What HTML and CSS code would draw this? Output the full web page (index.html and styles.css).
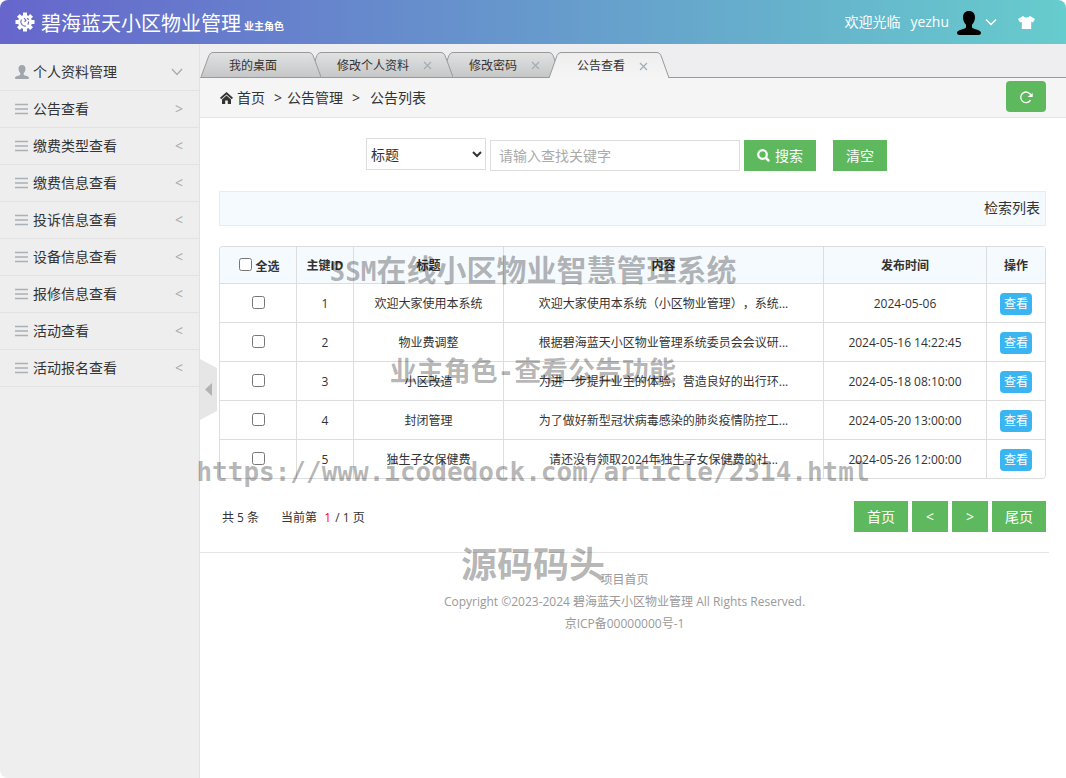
FILE: index.html
```html
<!DOCTYPE html>
<html lang="zh-CN">
<head>
<meta charset="utf-8">
<title>碧海蓝天小区物业管理</title>
<link rel="stylesheet" href="styles.css">
</head>
<body>
<svg class="defs" aria-hidden="true">
  <defs>
    <linearGradient id="tab-grey" x1="0" y1="0" x2="0" y2="1"><stop offset="0" stop-color="#e0e1e1"/><stop offset="1" stop-color="#c6c7c8"/></linearGradient>
    <linearGradient id="tab-light" x1="0" y1="0" x2="0" y2="1"><stop offset="0" stop-color="#eeeeef"/><stop offset="1" stop-color="#f5f5f5"/></linearGradient>
    <symbol id="bars" viewBox="0 0 13 12"><path d="M0 1.500h13M0 6h13M0 10.500h13" stroke="#a9b0b6" stroke-width="1.500"/></symbol>
    <symbol id="user" viewBox="0 0 24 24"><path d="M12 0c3.900 0 6 2.600 6 6.300 0 3-1.300 5.700-3 7.500v2.800c1.700 2 9 2.200 9 5.200 0 1.500-1 2.200-2.500 2.200h-19C1 24 0 23.300 0 21.800c0-3 7.300-3.200 9-5.200v-2.800C7.300 12 6 9.300 6 6.300 6 2.600 8.100 0 12 0z"/></symbol>
    <symbol id="cross" viewBox="0 0 9 9"><path d="M1 1l7 7M8 1L1 8" fill="none" stroke="currentColor" stroke-width="1.300"/></symbol>
    <symbol id="cap-left" viewBox="0 0 12 26" preserveAspectRatio="none"><path d="M0 26L8 3.500Q9.300.5 12 .5V26z"/><path d="M0 26L8 3.500Q9.300.5 12 .5" fill="none" stroke="#999"/></symbol>
    <symbol id="cap-right" viewBox="0 0 12 26" preserveAspectRatio="none"><path d="M12 26L4 3.500Q2.700.5 0 .5V26z"/><path d="M12 26L4 3.500Q2.700.5 0 .5" fill="none" stroke="#999"/></symbol>
  </defs>
</svg>
<div class="app">
  <header class="header">
    <svg class="logo" viewBox="0 0 20 20"><g stroke="#fff" stroke-width="4"><path d="M10 .5v19M.5 10h19M3.400 3.400l13.200 13.200M16.600 3.400L3.400 16.600"/></g><circle cx="10" cy="10" r="7" fill="#fff"/><path d="M6.500 7.500A4.300 4.300 0 0 0 11 14M9 6.200l2 2-1.500 1.700M13.500 9.500a4 4 0 0 1-.8 3.200M12 6.300a4 4 0 0 1 1.700 1.600" fill="none" stroke="#6a70cb" stroke-width="1.200"/></svg>
    <h1 class="title">碧海蓝天小区物业管理</h1>
    <span class="role">业主角色</span>
    <div class="account">
      <span>欢迎光临</span>
      <span class="name">yezhu</span>
      <svg class="avatar" viewBox="0 0 24 24"><use href="#user"/></svg>
      <svg class="down" viewBox="0 0 12 8"><path d="M1 1.500l5 5 5-5" fill="none" stroke="#fff" stroke-width="1.500"/></svg>
      <svg class="shirt" viewBox="0 0 17 13"><path d="M5 0q3.500 3 7 0l5 3-2 3.500-1.800-.8V13H3.800V5.700L2 6.500 0 3z" fill="#fff"/></svg>
    </div>
  </header>
  <div class="body">
    <nav class="sidebar">
      <a class="item" href="#"><svg class="icon person" viewBox="0 0 24 24"><use href="#user"/></svg><span>个人资料管理</span><svg class="arrow-down" viewBox="0 0 12 8"><path d="M1 1l5 5.500L11 1" fill="none" stroke="#aaa" stroke-width="1.300"/></svg></a>
      <a class="item" href="#"><svg class="icon"><use href="#bars"/></svg><span>公告查看</span><i class="arrow">&gt;</i></a>
      <a class="item" href="#"><svg class="icon"><use href="#bars"/></svg><span>缴费类型查看</span><i class="arrow">&lt;</i></a>
      <a class="item" href="#"><svg class="icon"><use href="#bars"/></svg><span>缴费信息查看</span><i class="arrow">&lt;</i></a>
      <a class="item" href="#"><svg class="icon"><use href="#bars"/></svg><span>投诉信息查看</span><i class="arrow">&lt;</i></a>
      <a class="item" href="#"><svg class="icon"><use href="#bars"/></svg><span>设备信息查看</span><i class="arrow">&lt;</i></a>
      <a class="item" href="#"><svg class="icon"><use href="#bars"/></svg><span>报修信息查看</span><i class="arrow">&lt;</i></a>
      <a class="item" href="#"><svg class="icon"><use href="#bars"/></svg><span>活动查看</span><i class="arrow">&lt;</i></a>
      <a class="item" href="#"><svg class="icon"><use href="#bars"/></svg><span>活动报名查看</span><i class="arrow">&lt;</i></a>
      <button class="collapse" type="button" aria-label="收起菜单"><svg viewBox="0 0 17 61"><path d="M0 0l17 9v43L0 61z" fill="#e6e6e6"/><path d="M12 24v13l-7-6.500z" fill="#b3b3b3"/></svg></button>
    </nav>
    <main class="main">
      <ul class="tabs">
        <li class="tab first"><svg class="cap"><use href="#cap-left"/></svg><span class="label">我的桌面</span><svg class="cap"><use href="#cap-right"/></svg></li>
        <li class="tab second"><svg class="cap"><use href="#cap-left"/></svg><span class="label">修改个人资料<svg class="close"><use href="#cross"/></svg></span><svg class="cap"><use href="#cap-right"/></svg></li>
        <li class="tab"><svg class="cap"><use href="#cap-left"/></svg><span class="label">修改密码<svg class="close"><use href="#cross"/></svg></span><svg class="cap"><use href="#cap-right"/></svg></li>
        <li class="tab active"><svg class="cap"><use href="#cap-left"/></svg><span class="label">公告查看<svg class="close"><use href="#cross"/></svg></span><svg class="cap"><use href="#cap-right"/></svg></li>
      </ul>
      <div class="crumbs">
        <svg class="home" viewBox="0 0 13 12"><path d="M6.500 0L13 5.800l-1.200 1.400-5.300-4.600-5.300 4.600L0 5.800z"/><path d="M6.500 3.500L11 7.400V12H7.800V8.500H5.200V12H2V7.400z"/></svg>
        <a href="#">首页</a><span class="sep">&gt;</span><a href="#">公告管理</a><span class="sep wide">&gt;</span><span>公告列表</span>
        <button class="refresh" type="button" aria-label="刷新"><svg viewBox="0 0 14 14"><path d="M11.500 10.200A5.300 5.300 0 1 1 12 5.500" fill="none" stroke="#fff" stroke-width="1.300"/><path d="M8.500 7h5.200V3z" fill="#fff"/></svg></button>
      </div>
      <section class="content">
        <form class="search">
          <select class="field" aria-label="查找字段"><option>标题</option></select>
          <input class="keyword" type="text" placeholder="请输入查找关键字" aria-label="关键字">
          <button class="btn" type="button"><svg class="glass" viewBox="0 0 13 13"><circle cx="5.500" cy="5.500" r="4.300" fill="none" stroke="#fff" stroke-width="2.200"/><path d="M8.500 8.500l3.700 3.700" stroke="#fff" stroke-width="2.600"/></svg>搜索</button>
          <button class="btn clear" type="button">清空</button>
        </form>
        <div class="toolbar">检索列表</div>
        <table class="list">
          <colgroup><col class="c-check"><col class="c-id"><col class="c-title"><col><col class="c-time"><col class="c-op"></colgroup>
          <thead>
            <tr><th><label class="all"><input type="checkbox">全选</label></th><th>主键ID</th><th>标题</th><th>内容</th><th>发布时间</th><th>操作</th></tr>
          </thead>
          <tbody>
            <tr><td><input type="checkbox" aria-label="选择 1"></td><td>1</td><td>欢迎大家使用本系统</td><td>欢迎大家使用本系统（小区物业管理），系统...</td><td>2024-05-06</td><td><a class="view" href="#">查看</a></td></tr>
            <tr><td><input type="checkbox" aria-label="选择 2"></td><td>2</td><td>物业费调整</td><td>根据碧海蓝天小区物业管理系统委员会会议研...</td><td>2024-05-16 14:22:45</td><td><a class="view" href="#">查看</a></td></tr>
            <tr><td><input type="checkbox" aria-label="选择 3"></td><td>3</td><td>小区改造</td><td>为进一步提升业主的体验，营造良好的出行环...</td><td>2024-05-18 08:10:00</td><td><a class="view" href="#">查看</a></td></tr>
            <tr><td><input type="checkbox" aria-label="选择 4"></td><td>4</td><td>封闭管理</td><td>为了做好新型冠状病毒感染的肺炎疫情防控工...</td><td>2024-05-20 13:00:00</td><td><a class="view" href="#">查看</a></td></tr>
            <tr><td><input type="checkbox" aria-label="选择 5"></td><td>5</td><td>独生子女保健费</td><td>请还没有领取2024年独生子女保健费的社...</td><td>2024-05-26 12:00:00</td><td><a class="view" href="#">查看</a></td></tr>
          </tbody>
        </table>
        <div class="pager">
          <span>共 5 条</span>
          <span class="page">当前第 <b>1</b> / 1 页</span>
          <div class="buttons">
            <button class="btn" type="button">首页</button>
            <button class="btn" type="button">&lt;</button>
            <button class="btn" type="button">&gt;</button>
            <button class="btn" type="button">尾页</button>
          </div>
        </div>
      </section>
      <footer class="footer">
        <p><a href="#">项目首页</a></p>
        <p>Copyright ©2023-2024 碧海蓝天小区物业管理 All Rights Reserved.</p>
        <p>京ICP备00000000号-1</p>
      </footer>
    </main>
  </div>
  <div class="watermark">
    <p class="w-name"><span>SSM</span>在线小区物业智慧管理系统</p>
    <p class="w-page">业主角色<span>-</span>查看公告功能</p>
    <p class="w-url">https://www.icodedock.com/article/2314.html</p>
    <p class="w-brand">源码码头</p>
  </div>
</div>
</body>
</html>
```
FILE: styles.css
```css
* { box-sizing: border-box; }
body {
  margin: 0;
  background: #fff;
  color: #333;
  font: 14px/20px "Open Sans", "Noto Sans CJK SC", sans-serif;
  text-spacing-trim: space-all;
}
a { color: inherit; text-decoration: none; }
p, ul, h1 { margin: 0; padding: 0; }
button, input, select { font: inherit; }
svg { flex: none; display: block; }
.defs { position: absolute; width: 0; height: 0; }

.app {
  position: relative;
  display: flex;
  flex-direction: column;
  min-height: 100vh;
  overflow: hidden;
  border-radius: 8px;
  background: #fff;
}

.header {
  display: flex;
  align-items: center;
  height: 44px;
  padding: 0 31px 0 15px;
  color: #fff;
  background: linear-gradient(90deg, #66c, #6cc);
}
.logo { width: 20px; height: 20px; margin-right: 6px; }
.title { padding-top: 3px; font-size: 20px; line-height: 41px; font-weight: 400; }
.role { margin: 8px 0 0 3px; font-size: 10px; font-weight: 700; }
.account { display: flex; align-items: center; margin-left: auto; }
.name { margin: 0 8px 0 10px; }
.avatar { width: 24px; height: 24px; margin-top: 2px; fill: #000; }
.down { width: 12px; height: 8px; margin: 0 21px 0 4px; }
.shirt { width: 17px; height: 13px; }

.body { display: flex; flex: 1; }
.sidebar {
  position: relative;
  flex: none;
  width: 200px;
  padding-top: 10px;
  background: #eee;
  border-right: 1px solid #e2e2e2;
}
.item {
  display: flex;
  align-items: center;
  height: 37px;
  padding: 0 16px 0 15px;
  border-bottom: 1px solid #e2e2e2;
}
.icon { width: 13px; height: 12px; margin-right: 5px; }
.person { width: 14px; height: 14px; margin-right: 4px; fill: #a0a6ac; }
.arrow { margin-left: auto; color: #aaa; font-style: normal; }
.arrow-down { width: 12px; height: 8px; margin-left: auto; }
.collapse {
  position: absolute;
  top: 315px;
  left: 200px;
  width: 17px;
  height: 61px;
  padding: 0;
  border: 0;
  background: none;
}
.collapse svg { width: 17px; height: 61px; }

.main { flex: 1; min-width: 0; }
.tabs {
  display: flex;
  align-items: flex-end;
  height: 34px;
  padding-left: 1px;
  background: #eeeef0;
  border-bottom: 1px solid #999;
  list-style: none;
  font-size: 12px;
}
.tab { position: relative; display: flex; height: 25px; margin: 0 -12px 0 0; fill: url(#tab-grey); }
.cap { width: 12px; height: 100%; }
.label {
  display: flex;
  align-items: center;
  height: 100%;
  padding: 1px 9px 0 16px;
  border-top: 1px solid #999;
  background: linear-gradient(#e0e1e1, #c6c7c8);
}
.first { z-index: 3; }
.first .label { padding-right: 32px; }
.second { z-index: 2; }
.tab.active { z-index: 4; fill: url(#tab-light); margin-bottom: -1px; height: 26px; }
.active .label { background: linear-gradient(#eeeeef, #f5f5f5); }
.close { width: 9px; height: 9px; margin-left: 14px; color: #a5adb3; }

.crumbs {
  display: flex;
  align-items: center;
  height: 40px;
  padding: 0 20px;
  background: #f5f5f5;
  border-bottom: 1px solid #e5e5e5;
}
.home { width: 13px; height: 12px; margin-right: 4px; fill: #333; }
.sep { margin: 0 5px 0 9px; }
.sep.wide { margin-right: 10px; }
.refresh {
  display: flex;
  align-items: center;
  justify-content: center;
  width: 40px;
  height: 31px;
  margin-left: auto;
  margin-bottom: 2px;
  padding: 0;
  border: 0;
  border-radius: 4px;
  background: #5eb85e;
}
.refresh svg { width: 14px; height: 14px; }

.content { padding: 20px 20px 20px 19px; }
.search { display: flex; justify-content: center; gap: 4px; padding-right: 12px; }
.field {
  width: 120px;
  height: 32px;
  padding: 0;
  border: 1px solid #ddd;
  background: #fff;
  color: #333;
}
.keyword {
  width: 250px;
  height: 31px;
  margin-top: 2px;
  padding: 4px 8px;
  border: 1px solid #ddd;
}
.keyword::placeholder { color: #aaa; }
.btn {
  display: flex;
  align-items: center;
  justify-content: center;
  min-width: 36px;
  height: 31px;
  padding: 0 13px;
  border: 0;
  background: #5eb85e;
  color: #fff;
}
.search .btn { margin-top: 2px; }
.search .clear { margin-left: 13px; }
.glass { width: 13px; height: 13px; margin-right: 5px; }

.toolbar {
  height: 35px;
  margin-top: 20px;
  padding: 0 5px;
  border: 1px solid #ebebeb;
  background: #f5fafe;
  line-height: 32px;
  text-align: right;
}

.list {
  width: 100%;
  margin-top: 20px;
  table-layout: fixed;
  border: 1px solid #ddd;
  border-width: 1px 0 0 1px;
  border-radius: 4px;
  border-spacing: 0;
  overflow: hidden;
  font-size: 12px;
  text-align: center;
}
.c-check { width: 77px; }
.c-id { width: 57px; }
.c-title { width: 150px; }
.c-time { width: 163px; }
.c-op { width: 59px; }
.list th, .list td {
  padding: 2px 0 0;
  border: 1px solid #ddd;
  border-width: 0 1px 1px 0;
  white-space: nowrap;
}
.list th { height: 37px; background: #f5fafe; }
.list td { height: 39px; }
.list tr:last-child td:last-child { border-bottom-right-radius: 4px; }
.list input { margin: 3px; vertical-align: 0; }
.list td input { margin-bottom: 5px; }
.list th input { margin-bottom: 2px; }
.view {
  display: inline-block;
  padding: 1px 4px;
  border-radius: 4px;
  background: #3bb4f2;
  color: #fff;
}

.pager {
  display: flex;
  align-items: center;
  margin-top: 22px;
  padding-left: 3px;
  font-size: 12px;
}
.pager span { padding-top: 2px; }
.page { margin-left: 22px; }
.page b { margin: 0 1px 0 4px; color: #f00; font-weight: 400; }
.buttons { display: flex; gap: 4px; margin-left: auto; font-size: 14px; }

.footer {
  margin-right: 17px;
  padding-top: 16px;
  border-top: 1px solid #e5e5e5;
  color: #999;
  font-size: 12px;
  line-height: 22px;
  text-align: center;
}

/* Overlay centred on the whole window */
.watermark {
  position: absolute;
  inset: 0;
  z-index: 10;
  padding-top: 248px;
  color: rgba(0, 0, 0, .3);
  font-family: "Noto Sans CJK SC", sans-serif;
  font-weight: 700;
  line-height: 40px;
  text-align: center;
  pointer-events: none;
}
.watermark span, .w-url { font-family: "DejaVu Sans Mono", monospace; }
.w-name { font-size: 30px; }
.w-name span { font-size: 26px; }
.w-page { margin-top: 58px; font-size: 27px; }
.w-url { margin-top: 60px; font-size: 26px; }
.w-brand { margin-top: 50px; font-size: 36px; }
```
